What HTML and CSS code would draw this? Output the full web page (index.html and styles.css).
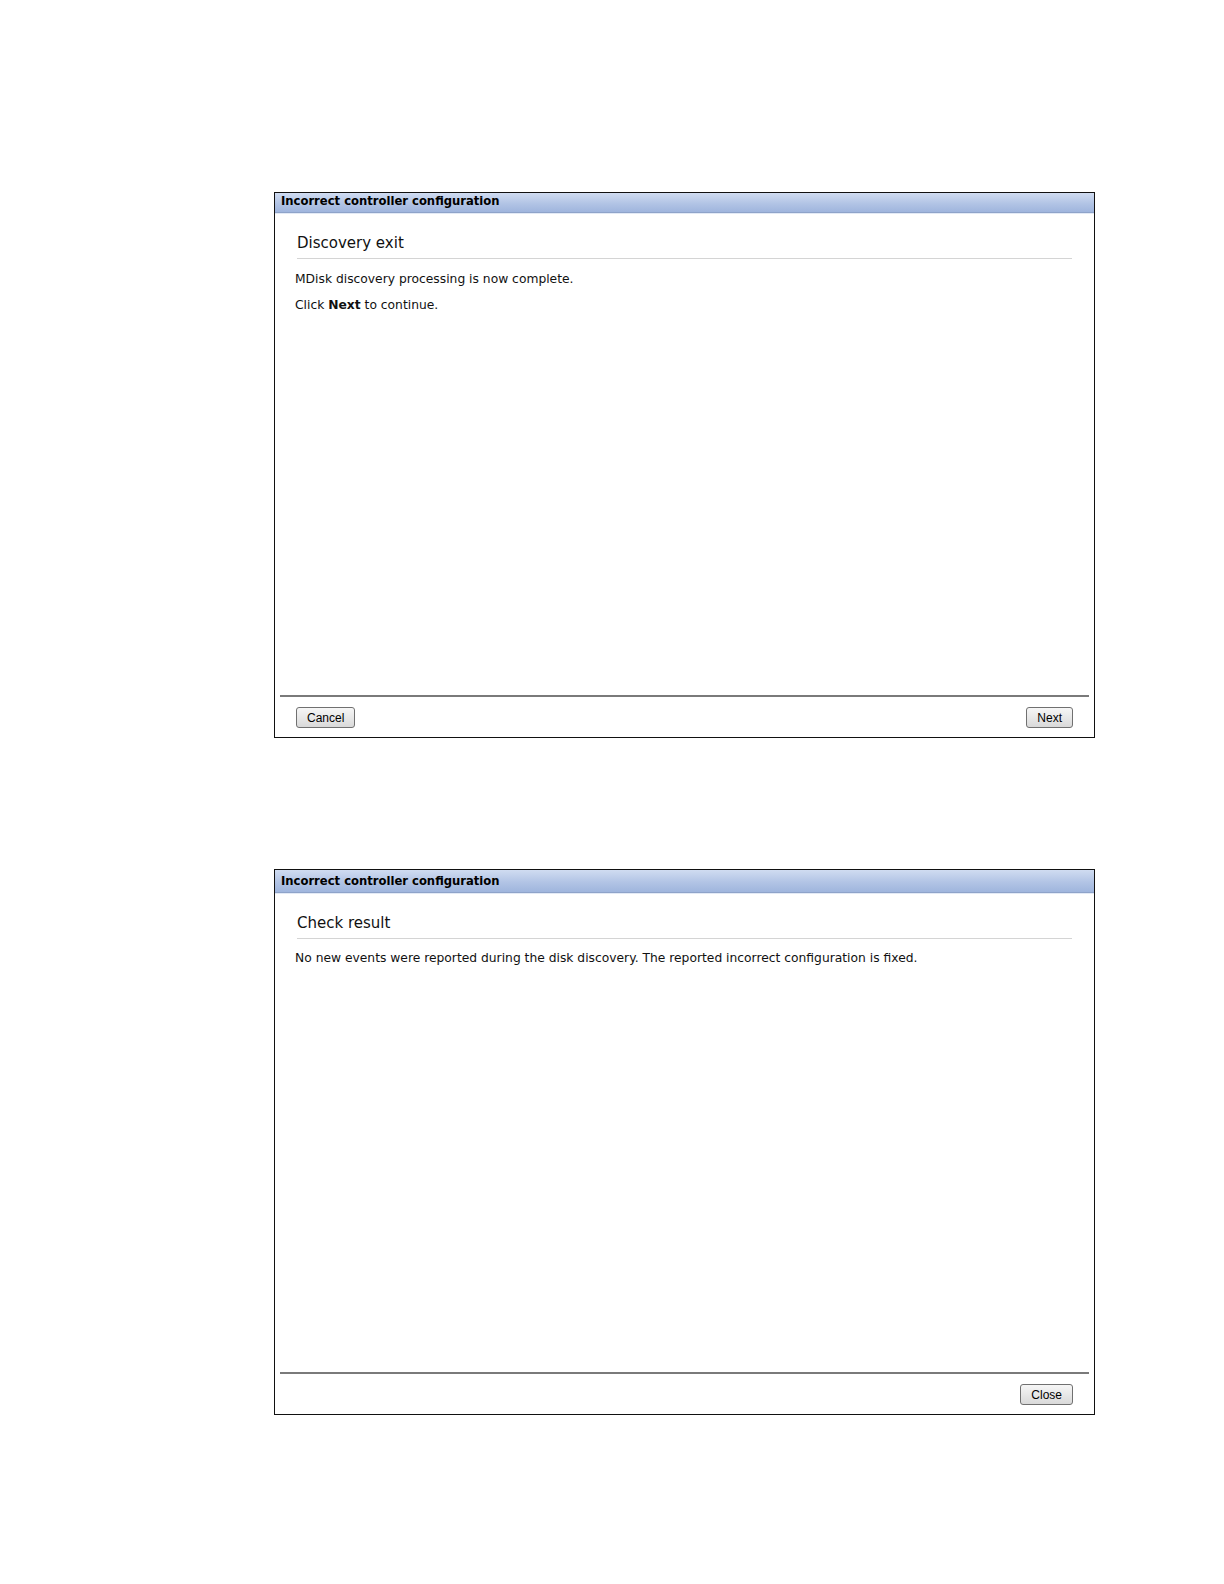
FILE: index.html
```html
<!DOCTYPE html>
<html>
<head>
<meta charset="utf-8">
<link rel="stylesheet" href="styles.css">
</head>
<body>
<div class="page">
  <div class="dialog">
    <div class="titlebar">Incorrect controller configuration</div>
    <div class="content">
      <h2 class="heading">Discovery exit</h2>
      <p class="text">MDisk discovery processing is now complete.</p>
      <p class="text">Click <b>Next</b> to continue.</p>
    </div>
    <div class="footer">
      <button class="btn">Cancel</button>
      <button class="btn">Next</button>
    </div>
  </div>
  <div class="dialog">
    <div class="titlebar titlebar-tall">Incorrect controller configuration</div>
    <div class="content">
      <h2 class="heading">Check result</h2>
      <p class="text text-single">No new events were reported during the disk discovery. The reported incorrect configuration is fixed.</p>
    </div>
    <div class="footer footer-end">
      <button class="btn">Close</button>
    </div>
  </div>
</div>
</body>
</html>
```
FILE: styles.css
```css
html, body { margin: 0; padding: 0; background: #fff; }
.page {
  padding: 192px 0 0 274px;
  display: flex;
  flex-direction: column;
  gap: 131px;
}
.dialog {
  width: 819px;
  height: 544px;
  border: 1px solid #111;
  display: flex;
  flex-direction: column;
  background: #fff;
}
.titlebar {
  height: 19px;
  line-height: 17px;
  padding-left: 6px;
  font-family: "DejaVu Sans", Verdana, sans-serif;
  font-weight: bold;
  font-size: 11.6px;
  color: #000;
  background: linear-gradient(#d0dcf1, #b2c4e5 55%, #9fb5dd);
  border-bottom: 1px solid #8ea3c9;
  box-shadow: 0 1px 0 #e3eaf6;
}
.titlebar-tall {
  height: 22px;
  line-height: 22px;
}
.content {
  flex: 1;
  padding: 21px 22px 0 21px;
}
.heading {
  margin: 0 0 0 1px;
  font-family: "DejaVu Sans", Verdana, sans-serif;
  font-weight: normal;
  font-size: 15px;
  line-height: 18px;
  color: #111;
  padding-bottom: 6px;
  border-bottom: 1px solid #d4d4d4;
}
.text {
  margin: 13px 0 0 -1px;
  font-family: "DejaVu Sans", Verdana, sans-serif;
  font-size: 12.3px;
  color: #111;
  line-height: 15px;
}
.text + .text { margin-top: 11px; }
.text-single { margin-top: 12px; }
.footer {
  margin: 0 5px;
  border-top: 2px solid #7a7a7a;
  height: 42px;
  padding: 10px 16px 0 16px;
  box-sizing: border-box;
  display: flex;
  justify-content: space-between;
  align-items: flex-start;
}
.footer-end { justify-content: flex-end; }
.btn {
  height: 21px;
  padding: 0 10px;
  font-family: "Liberation Sans", Arial, sans-serif;
  font-size: 12px;
  color: #000;
  border: 1px solid #707070;
  border-radius: 3px;
  background: linear-gradient(#f6f6f6, #e8e8e8 50%, #d9d9d9);
}
```
